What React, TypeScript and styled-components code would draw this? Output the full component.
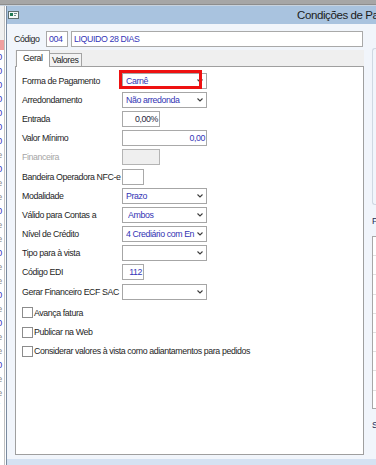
import React from "react";
import styled, { createGlobalStyle } from "styled-components";

// Arial métrico, apertado para imitar o Tahoma reduzido da tela
const UI_FONT = `"Liberation Sans", Arial, sans-serif`;

const GlobalStyle = createGlobalStyle`
  html, body {
    margin: 0;
    padding: 0;
    background: #a4a4a4;
  }
  body {
    font-family: ${UI_FONT};
  }
`;

type Field = {
  label: string;
  muted?: boolean;
  control: React.ReactNode;
};

const backGlyphs = ["0", "0", "0", "0", "0", "0", "0", "e", "0", "e", "e", "0", "e", "e", "0", "e", "e", "0", "e", "0", "e", "e", "0", "e", "e", "(", "", "", ""];

function Combo({ value, indent, highlight }: { value: string; indent?: boolean; highlight?: boolean }) {
  return (
    <ComboBox $indent={indent}>
      <ComboText>{value}</ComboText>
      <svg width="6" height="4" viewBox="0 0 6 4">
        <polyline points="0.5,0.5 3,3 5.5,0.5" fill="none" stroke="#3c3c3c" strokeWidth="1.1" />
      </svg>
      {highlight ? <Highlight /> : null}
    </ComboBox>
  );
}

function App() {
  const fields: Field[] = [
    { label: "Forma de Pagamento", control: <Combo value="Carnê" highlight /> },
    { label: "Arredondamento", control: <Combo value="Não arredonda" /> },
    { label: "Entrada", control: <TextBox $width={38} $align="right" $tone="dark">0,00%</TextBox> },
    { label: "Valor Mínimo", control: <TextBox $width={85} $align="right">0,00</TextBox> },
    { label: "Financeira", muted: true, control: <TextBox $width={38} $disabled /> },
    { label: "Bandeira Operadora NFC-e", control: <TextBox $width={22} /> },
    { label: "Modalidade", control: <Combo value="Prazo" /> },
    { label: "Válido para Contas a", control: <Combo value="Ambos" indent /> },
    { label: "Nível de Crédito", control: <Combo value="4 Crediário com En" /> },
    { label: "Tipo para à vista", control: <Combo value="" /> },
    { label: "Código EDI", control: <TextBox $width={22} $align="right">112</TextBox> },
    { label: "Gerar Financeiro ECF SAC", control: <Combo value="" /> },
  ];

  const checks = ["Avança fatura", "Publicar na Web", "Considerar valores à vista como adiantamentos para pedidos"];

  return (
    <Screen>
      <GlobalStyle />
      <TopBand />
      <Desk>
        <BackApp>
          <BackGrid>
            <BackHeader />
            <BackPink />
            {backGlyphs.map((g, i) => (
              <BackCell key={i} $blue={g === "0"}>
                {g}
              </BackCell>
            ))}
          </BackGrid>
        </BackApp>

        <Dialog>
          <TitleBar>
            <svg width="11" height="8" viewBox="0 0 11 8">
              <rect x="0.5" y="0.5" width="10" height="7" fill="#f4f7f7" stroke="#5d6f6f" />
              <rect x="2" y="2" width="3" height="3" fill="#1f7a55" />
              <rect x="6" y="2" width="3" height="1" fill="#6f8f8f" />
              <rect x="6" y="4" width="2" height="1" fill="#6f8f8f" />
            </svg>
            <Title>Condições de Pagamento</Title>
          </TitleBar>

          <Body>
            <MainColumn>
              <CodeRow>
                <CodeLabel>Código</CodeLabel>
                <TextBox $width={22}>004</TextBox>
                <NameBox>LIQUIDO 28 DIAS</NameBox>
              </CodeRow>

              <TabStrip>
                <Tab $active $width={34} $pad={6}>
                  Geral
                </Tab>
                <Tab $width={32} $pad={2}>
                  Valores
                </Tab>
              </TabStrip>

              <Panel>
                <FormGrid>
                  {fields.map((f) => (
                    <React.Fragment key={f.label}>
                      <FieldLabel $muted={f.muted}>{f.label}</FieldLabel>
                      {f.control}
                    </React.Fragment>
                  ))}
                </FormGrid>
                <CheckList>
                  {checks.map((c) => (
                    <CheckRow key={c}>
                      <CheckSquare />
                      <span>{c}</span>
                    </CheckRow>
                  ))}
                </CheckList>
              </Panel>
            </MainColumn>

            <SideColumn>
              <GroupOutline />
              <SideCaption>Parcelas</SideCaption>
              <DataGrid>
                {Array.from({ length: 9 }).map((_, i) => (
                  <GridRow key={i} />
                ))}
              </DataGrid>
              <SideCaption>Situação</SideCaption>
            </SideColumn>
          </Body>
          <Footer />
        </Dialog>
      </Desk>
    </Screen>
  );
}

export default App;

const Screen = styled.div`
  width: 376px;
  height: 465px;
  overflow: hidden;
  display: flex;
  flex-direction: column;
  background: #a4a4a4;
  font-family: ${UI_FONT};
  font-size: 8.8px;
  letter-spacing: -0.4px;
  color: #1e1e1e;
`;

const TopBand = styled.div`
  flex: none;
  height: 6px;
  background: linear-gradient(#a6a6a6 0 4px, #8d8d8d 4px 5px, #c9d3de 5px);
`;

const Desk = styled.div`
  flex: 1;
  min-height: 0;
  display: flex;
`;

const BackApp = styled.div`
  flex: none;
  width: 6px;
  background: #ffffff;
`;

const BackGrid = styled.div`
  width: 4px;
  height: 100%;
  overflow: hidden;
  border-right: 1px solid #c2c2c2;
`;

const BackHeader = styled.div`
  height: 34px;
  background: #f0f0f0;
`;

const BackPink = styled.div`
  height: 10px;
  background: #f0a0a0;
`;

const BackCell = styled.div<{ $blue?: boolean }>`
  height: 14px;
  line-height: 14px;
  font-size: 9.5px;
  letter-spacing: 0;
  text-indent: -3px;
  white-space: nowrap;
  color: ${(p) => (p.$blue ? "#3a3ac0" : "#8a8a8a")};
`;

const Dialog = styled.div`
  flex: none;
  width: 430px;
  display: flex;
  flex-direction: column;
  border-left: 1px solid #7a8ba0;
  background: #f1f5fb;
`;

const TitleBar = styled.div`
  flex: none;
  height: 18px;
  display: flex;
  align-items: center;
  padding-left: 1px;
  background: #a9c3df;

  svg {
    flex: none;
  }
`;

const Title = styled.div`
  margin-left: 278px;
  font-size: 11.5px;
  letter-spacing: -0.4px;
  color: #1b1b1b;
  white-space: nowrap;
`;

const Body = styled.div`
  flex: 1;
  min-height: 0;
  display: flex;
  padding: 7px 0 0 7px;
`;

const MainColumn = styled.div`
  flex: none;
  width: 350px;
  display: flex;
  flex-direction: column;
`;

const CodeRow = styled.div`
  display: flex;
  align-items: center;
  height: 16px;
`;

const CodeLabel = styled.span`
  width: 32px;
  flex: none;
`;

const TextBox = styled.div<{
  $width: number;
  $align?: "left" | "right";
  $tone?: "blue" | "dark";
  $disabled?: boolean;
}>`
  box-sizing: border-box;
  flex: none;
  justify-self: start;
  width: ${(p) => p.$width}px;
  height: 16px;
  line-height: 14px;
  padding: 0 ${(p) => (p.$align === "right" ? 1 : 2)}px 0 2px;
  text-align: ${(p) => p.$align || "left"};
  border: 1px solid ${(p) => (p.$disabled ? "#b4b4b4" : "#a9a9a9")};
  background: ${(p) => (p.$disabled ? "#efefef" : "#ffffff")};
  color: ${(p) => (p.$tone === "dark" ? "#262640" : "#3535b8")};
  white-space: nowrap;
  overflow: hidden;
`;

const NameBox = styled.div`
  box-sizing: border-box;
  flex: 1;
  margin: 0 1px 0 3px;
  height: 16px;
  line-height: 14px;
  padding-left: 2px;
  border: 1px solid #a9a9a9;
  background: #ffffff;
  color: #3535b8;
`;

const TabStrip = styled.div`
  flex: none;
  display: flex;
  align-items: flex-end;
  height: 16px;
  margin: 3px 0 0 1px;
  padding-left: 1px;
  background: #efefef;
`;

const Tab = styled.div<{ $active?: boolean; $width: number; $pad: number }>`
  box-sizing: border-box;
  position: relative;
  z-index: 1;
  width: ${(p) => p.$width}px;
  height: ${(p) => (p.$active ? 17 : 13)}px;
  margin-bottom: ${(p) => (p.$active ? -1 : 0)}px;
  padding-left: ${(p) => p.$pad}px;
  line-height: ${(p) => (p.$active ? 15 : 12)}px;
  border: 1px solid #a3a3a3;
  border-bottom: none;
  ${(p) => (p.$active ? "" : "border-left: none;")}
  background: ${(p) => (p.$active ? "#ffffff" : "#f3f3f3")};
  white-space: nowrap;
`;

const Panel = styled.div`
  box-sizing: border-box;
  flex: none;
  height: 389px;
  margin-left: 1px;
  padding: 4px 0 0 6px;
  border: 1px solid #9f9f9f;
  background: #ffffff;
`;

const FormGrid = styled.div`
  display: grid;
  grid-template-columns: 100px 1fr;
  grid-auto-rows: 19.2px;
  align-items: center;
`;

const FieldLabel = styled.span<{ $muted?: boolean }>`
  white-space: nowrap;
  color: ${(p) => (p.$muted ? "#a6a6a6" : "#1e1e1e")};
`;

const ComboBox = styled.div<{ $indent?: boolean }>`
  box-sizing: border-box;
  position: relative;
  justify-self: start;
  display: flex;
  align-items: center;
  width: 85px;
  height: 16px;
  padding: 0 3px 0 ${(p) => (p.$indent ? 5 : 3)}px;
  border: 1px solid #a6a6a6;
  background: #ffffff;
  color: #3434b4;
`;

const ComboText = styled.span`
  flex: 1;
  overflow: hidden;
  white-space: nowrap;
`;

const Highlight = styled.div`
  position: absolute;
  left: -4px;
  top: -4px;
  width: 83px;
  height: 19px;
  box-sizing: border-box;
  border: 3px solid #ee1111;
  pointer-events: none;
`;

const CheckList = styled.div`
  margin-top: 2px;
`;

const CheckRow = styled.div`
  display: flex;
  align-items: center;
  height: 19.2px;
  white-space: nowrap;
`;

const CheckSquare = styled.span`
  box-sizing: border-box;
  flex: none;
  width: 11px;
  height: 11px;
  margin-right: 1px;
  border: 1px solid #8c8c8c;
  background: #ffffff;
`;

const SideColumn = styled.div`
  flex: none;
  width: 60px;
  margin-left: 8px;
  display: flex;
  flex-direction: column;
`;

const GroupOutline = styled.div`
  height: 155px;
  margin-top: 17px;
  border: 1px solid #cfd8e2;
  border-right: none;
  border-radius: 3px 0 0 3px;
`;

const SideCaption = styled.div`
  margin-top: 10px;
  line-height: 12px;
  color: #1d2a55;
  white-space: nowrap;
`;

const DataGrid = styled.div`
  box-sizing: border-box;
  height: 173px;
  margin-top: 9px;
  border: 1px solid #a8a8a8;
  border-right: none;
  background: #ffffff;
  overflow: hidden;
`;

const GridRow = styled.div`
  box-sizing: border-box;
  height: 19.2px;
  border-bottom: 1px solid #e0e0e0;
`;

const Footer = styled.div`
  flex: none;
  height: 6px;
  background: #d5e2f2;
`;
